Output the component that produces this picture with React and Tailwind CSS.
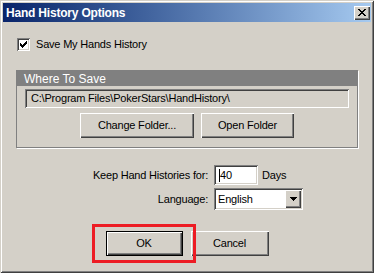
const font = { fontFamily: '"Liberation Sans", Arial, sans-serif' }

// classic win2k bevels
const raised = 'shadow-[inset_1px_1px_0_#fff,inset_-1px_-1px_0_#404040,inset_-2px_-2px_0_#808080]'
const sunken = 'shadow-[inset_1px_1px_0_#808080,inset_-1px_-1px_0_#fff,inset_2px_2px_0_#404040,inset_-2px_-2px_0_#d4d0c8]'

function Button({ children, className = '', isDefault = false }) {
  if (isDefault) {
    return (
      <div className={`border border-black bg-[#d4d0c8] ${className}`}>
        <div className={`h-full w-full flex items-center justify-center text-[11px] tracking-[-0.2px] text-black ${raised}`}>{children}</div>
      </div>
    )
  }
  return (
    <div className={`bg-[#d4d0c8] flex items-center justify-center text-[11px] tracking-[-0.2px] text-black ${raised} ${className}`}>
      {children}
    </div>
  )
}

function CloseButton() {
  return (
    <div className={`w-[16px] h-[14px] bg-[#d4d0c8] flex items-center justify-center ${raised}`}>
      <svg width="8" height="7" viewBox="0 0 8 7" shapeRendering="crispEdges">
        <path d="M0 0h2v1h-2zM6 0h2v1h-2zM1 1h2v1h-2zM5 1h2v1h-2zM2 2h4v1h-4zM3 3h2v1h-2zM2 4h4v1h-4zM1 5h2v1h-2zM5 5h2v1h-2zM0 6h2v1h-2zM6 6h2v1h-2z" fill="#000" />
      </svg>
    </div>
  )
}

export default function App() {
  return (
    <div style={font}
      className="relative w-[374px] h-[273px] bg-[#d4d0c8] p-[3px] shadow-[inset_1px_1px_0_#d4d0c8,inset_-1px_-1px_0_#404040,inset_2px_2px_0_#fff,inset_-2px_-2px_0_#808080] overflow-hidden">
      {/* title bar */}
      <div className="h-[19px] flex items-center justify-between pl-[3px] pr-[1px] bg-gradient-to-r from-[#0a246a] to-[#a6caf0]">
        <span className="text-white font-bold text-[12px] tracking-[-0.2px] leading-none">Hand History Options</span>
        <CloseButton />
      </div>

      {/* save checkbox */}
      <div className="flex items-center mt-[16px] ml-[14px] h-[13px]">
        <div className={`w-[13px] h-[13px] bg-white flex items-center justify-center ${sunken}`}>
          <svg width="7" height="7" viewBox="0 0 7 7" shapeRendering="crispEdges">
            <path d="M6 0h1v3h-1zM5 1h1v3h-1zM4 2h1v3h-1zM3 3h1v3h-1zM2 4h1v3h-1zM1 3h1v3h-1zM0 2h1v3h-1z" fill="#000" />
          </svg>
        </div>
        <span className="ml-[6px] text-[11px] tracking-[-0.2px] text-black">Save My Hands History</span>
      </div>

      {/* where to save group */}
      <div className="mt-[19px] mx-[13px] border border-[#808080] shadow-[1px_1px_0_#fff] h-[78px]">
        <div className="h-[15px] bg-[#808080] flex items-center pl-[7px]">
          <span className="text-white text-[12px] leading-none">Where To Save</span>
        </div>
        <div className={`mt-[3px] mx-[8px] h-[19px] flex items-center pl-[6px] text-[11px] tracking-[-0.2px] text-black ${sunken}`}>
          C:\Program Files\PokerStars\HandHistory\
        </div>
        <div className="mt-[5px] flex justify-center gap-[7px]">
          <Button className="w-[114px] h-[25px]">Change Folder...</Button>
          <Button className="w-[93px] h-[25px]">Open Folder</Button>
        </div>
      </div>

      {/* options */}
      <div className="mt-[17px] grid grid-cols-[205px_auto] gap-x-[6px] gap-y-[3px] items-center text-[11px] tracking-[-0.2px] text-black">
        <span className="text-right">Keep Hand Histories for:</span>
        <div className="flex items-center">
          <div className={`w-[44px] h-[20px] bg-white flex items-center pl-[5px] ${sunken}`}>
            <span className="w-px h-[13px] bg-black" />
            <span>40</span>
          </div>
          <span className="ml-[4px]">Days</span>
        </div>
        <span className="text-right">Language:</span>
        <div className={`w-[89px] h-[22px] bg-white flex items-center p-[2px] ${sunken}`}>
          <span className="flex-1 pl-[2px]">English</span>
          <div className={`w-[16px] h-[18px] bg-[#d4d0c8] flex items-center justify-center ${raised}`}>
            <svg width="7" height="4" viewBox="0 0 7 4" shapeRendering="crispEdges">
              <path d="M0 0h7v1h-7zM1 1h5v1h-5zM2 2h3v1h-3zM3 3h1v1h-1z" fill="#000" />
            </svg>
          </div>
        </div>
      </div>

      {/* ok / cancel */}
      <div className="mt-[21px] flex justify-center gap-[8px]">
        <Button isDefault className="w-[77px] h-[25px]">OK</Button>
        <Button className="w-[78px] h-[25px]">Cancel</Button>
      </div>

      {/* highlight annotation */}
      <div className="absolute left-[92px] top-[224px] w-[104px] h-[39px] border-[3px] border-[#ed1c24]" />
    </div>
  )
}
